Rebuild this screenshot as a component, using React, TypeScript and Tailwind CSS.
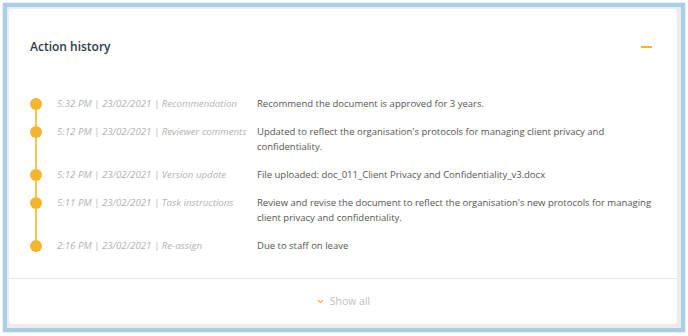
import { ChevronDown } from "lucide-react";

const history = [
  {
    id: 1,
    time: "5:32 PM",
    date: "23/02/2021",
    type: "Recommendation",
    text: "Recommend the document is approved for 3 years.",
  },
  {
    id: 2,
    time: "5:12 PM",
    date: "23/02/2021",
    type: "Reviewer comments",
    text: "Updated to reflect the organisation's protocols for managing client privacy and confidentiality.",
  },
  {
    id: 3,
    time: "5:12 PM",
    date: "23/02/2021",
    type: "Version update",
    text: "File uploaded: doc_011_Client Privacy and Confidentiality_v3.docx",
  },
  {
    id: 4,
    time: "5:11 PM",
    date: "23/02/2021",
    type: "Task instructions",
    text: "Review and revise the document to reflect the organisation's new protocols for managing client privacy and confidentiality.",
  },
  {
    id: 5,
    time: "2:16 PM",
    date: "23/02/2021",
    type: "Re-assign",
    text: "Due to staff on leave",
  },
];

const App = () => {
  return (
    <div
      className="w-[688px] h-[336px] bg-white pt-[3px] pl-[3px]"
      style={{ fontFamily: '"Open Sans", "Liberation Sans", sans-serif' }}
    >
      <div className="w-[682px] h-[329px] border-4 border-[#a9cfe6] bg-[#ececec] pt-[2px] pl-[2px] pr-[4px] pb-[4px] shadow-[0_0_2px_rgba(120,170,210,0.6)]">
        <div className="h-full bg-white rounded-[3px] flex flex-col">
          <div className="flex items-center justify-between pl-[21px] pr-[25px] pt-[30px]">
            <h2 className="text-[12px] leading-[16px] font-semibold text-[#2e3a46]">
              Action history
            </h2>
            <span className="block w-[11px] h-[2px] bg-[#f5b52e]" />
          </div>

          <ul className="pl-[21px] pt-[41px] flex-1">
            {history.map((item, i) => (
              <li key={item.id} className="flex">
                <div className="w-[12px] flex flex-col items-center">
                  <span
                    className={`w-[2px] h-[1.5px] ${i === 0 ? "" : "bg-[#f7c84a]"}`}
                  />
                  <span className="w-[12px] h-[12px] rounded-full bg-[#f5b52e] shrink-0" />
                  <span
                    className={`w-[2px] flex-1 ${
                      i === history.length - 1 ? "" : "bg-[#f7c84a]"
                    }`}
                  />
                </div>
                <div className="flex pb-[13px] leading-[15px]">
                  <div className="w-[215px] shrink-0 pl-[15px] text-[9.7px] italic text-[#b3b3b3] whitespace-nowrap">
                    {item.time} | {item.date} | {item.type}
                  </div>
                  <div className="w-[400px] text-[9.5px] text-[#555555]">{item.text}</div>
                </div>
              </li>
            ))}
          </ul>

          <div className="border-t border-[#e6e6e6] h-[46px] flex items-center justify-center gap-x-[5px]">
            <ChevronDown className="w-[9px] h-[9px] text-[#f5a623]" strokeWidth={3} />
            <span className="text-[10.5px] text-[#c0c0c0]">Show all</span>
          </div>
        </div>
      </div>
    </div>
  );
};

export default App;
